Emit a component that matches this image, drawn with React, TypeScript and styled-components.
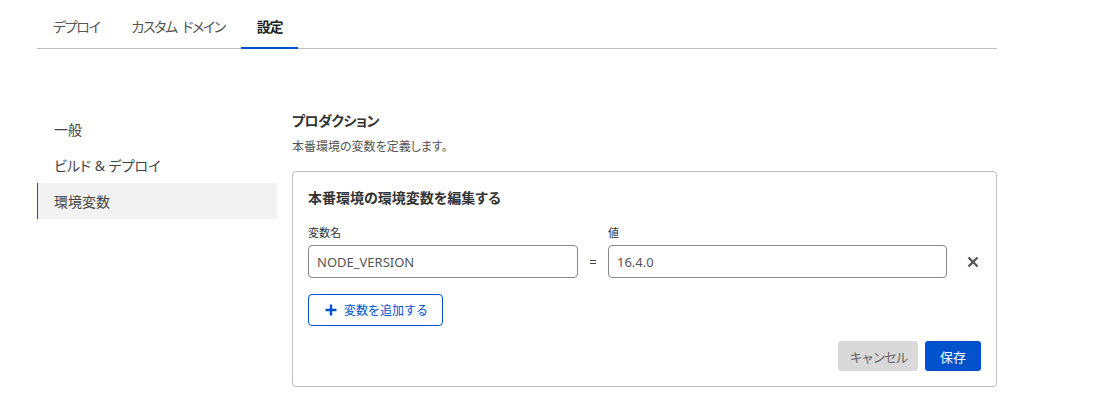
import React from 'react';
import styled, { createGlobalStyle } from 'styled-components';

const GlobalStyle = createGlobalStyle`
  body {
    margin: 0;
    background: #fff;
    font-family: "Noto Sans", "Noto Sans CJK JP", sans-serif;
    font-feature-settings: "palt";
    color: #333;
  }
`;

const Page = styled.div`
  width: 960px;
  padding-left: 37px;
`;

const TabBar = styled.nav`
  display: flex;
  height: 49px;
  border-bottom: 1px solid #bdbdbd;
  box-sizing: border-box;
`;

const Tab = styled.div<{ $active?: boolean }>`
  display: flex;
  align-items: center;
  padding: 4px 16px 0;
  font-size: 14px;
  letter-spacing: -1.4px;
  white-space: pre;
  color: ${(p) => (p.$active ? '#222' : '#555')};
  font-weight: ${(p) => (p.$active ? 600 : 400)};
  border-bottom: 2px solid ${(p) => (p.$active ? '#0052cc' : 'transparent')};
  margin-bottom: -1px;
`;

const Body = styled.div`
  display: flex;
  gap: 15px;
  margin-top: 62px;
`;

const SideNav = styled.ul`
  list-style: none;
  margin: 0;
  padding: 0;
  width: 240px;
  flex-shrink: 0;
`;

const NavItem = styled.li<{ $active?: boolean }>`
  height: 36px;
  display: flex;
  align-items: center;
  padding-left: 16px;
  font-size: 14px;
  color: #444;
  white-space: pre;
  background: ${(p) => (p.$active ? '#f2f2f2' : 'transparent')};
  border-left: 1px solid ${(p) => (p.$active ? '#0052cc' : 'transparent')};
`;

const Main = styled.section`
  flex: 1;
  min-width: 0;
`;

const SectionTitle = styled.h2`
  margin: 0;
  font-size: 14px;
  font-weight: 700;
  letter-spacing: -0.5px;
  color: #333;
  line-height: 20px;
`;

const SectionDesc = styled.p`
  margin: 7px 0 0;
  font-size: 12px;
  color: #555;
  line-height: 18px;
`;

const Card = styled.div`
  margin-top: 15px;
  border: 1px solid #bdbdbd;
  border-radius: 4px;
  padding: 16px 15px 15px 15px;
`;

const CardTitle = styled.h3`
  margin: 0;
  font-size: 14px;
  font-weight: 700;
  color: #333;
  line-height: 20px;
`;

const Row = styled.div`
  display: flex;
  align-items: flex-end;
  margin-top: 18px;
`;

const Field = styled.label<{ $width: number }>`
  display: flex;
  flex-direction: column;
  width: ${(p) => p.$width}px;
`;

const FieldLabel = styled.span`
  font-size: 11px;
  color: #333;
  line-height: 14px;
  margin-bottom: 5px;
`;

const Input = styled.input`
  height: 33px;
  box-sizing: border-box;
  border: 1px solid #888;
  border-radius: 4px;
  padding: 0 8px;
  font-family: inherit;
  font-size: 13px;
  color: #555;
  background: #fff;
  outline: none;
`;

const Equals = styled.span`
  width: 30px;
  height: 33px;
  display: flex;
  align-items: center;
  justify-content: center;
  font-size: 13px;
  color: #444;
`;

const RemoveButton = styled.button`
  width: 12px;
  height: 33px;
  margin: 0 2px 0 auto;
  display: flex;
  align-items: center;
  justify-content: center;
  border: none;
  background: none;
  padding: 0;
  color: #555;
  cursor: pointer;
`;

const AddButton = styled.button`
  margin-top: 16px;
  height: 32px;
  box-sizing: border-box;
  display: inline-flex;
  align-items: center;
  gap: 7px;
  padding: 0 14px 0 16px;
  border: 1px solid #0052cc;
  border-radius: 4px;
  background: #fff;
  color: #0052cc;
  font-family: inherit;
  font-size: 12px;
  cursor: pointer;
`;

const Footer = styled.div`
  display: flex;
  justify-content: flex-end;
  gap: 7px;
  margin-top: 15px;
`;

const ActionButton = styled.button<{ $primary?: boolean }>`
  height: 30px;
  box-sizing: border-box;
  padding: ${(p) => (p.$primary ? '0 15px' : '0 11px')};
  border: none;
  border-radius: 3px;
  font-family: inherit;
  font-size: 13px;
  letter-spacing: ${(p) => (p.$primary ? '0' : '-1.5px')};
  background: ${(p) => (p.$primary ? '#0052cc' : '#d9d9d9')};
  color: ${(p) => (p.$primary ? '#fff' : '#666')};
  cursor: pointer;
`;

const Plus = () => (
  <svg width="12" height="12" viewBox="0 0 12 12">
    <path d="M6 0.5v11M0.5 6h11" stroke="currentColor" strokeWidth="2.4" />
  </svg>
);

const Cross = () => (
  <svg width="12" height="12" viewBox="0 0 12 12">
    <path d="M1.5 1.5l9 9M10.5 1.5l-9 9" stroke="currentColor" strokeWidth="2.4" />
  </svg>
);

export default function App() {
  return (
    <Page>
      <GlobalStyle />
      <TabBar>
        <Tab>デプロイ</Tab>
        <Tab>{'カスタム\u2002ドメイン'}</Tab>
        <Tab $active>設定</Tab>
      </TabBar>
      <Body>
        <SideNav>
          <NavItem>一般</NavItem>
          <NavItem>ビルド &amp; デプロイ</NavItem>
          <NavItem $active>環境変数</NavItem>
        </SideNav>
        <Main>
          <SectionTitle>プロダクション</SectionTitle>
          <SectionDesc>本番環境の変数を定義します。</SectionDesc>
          <Card>
            <CardTitle>本番環境の環境変数を編集する</CardTitle>
            <Row>
              <Field $width={270}>
                <FieldLabel>変数名</FieldLabel>
                <Input defaultValue="NODE_VERSION" />
              </Field>
              <Equals>=</Equals>
              <Field $width={339}>
                <FieldLabel>値</FieldLabel>
                <Input defaultValue="16.4.0" />
              </Field>
              <RemoveButton aria-label="削除">
                <Cross />
              </RemoveButton>
            </Row>
            <AddButton>
              <Plus />
              変数を追加する
            </AddButton>
            <Footer>
              <ActionButton>キャンセル</ActionButton>
              <ActionButton $primary>保存</ActionButton>
            </Footer>
          </Card>
        </Main>
      </Body>
    </Page>
  );
}
